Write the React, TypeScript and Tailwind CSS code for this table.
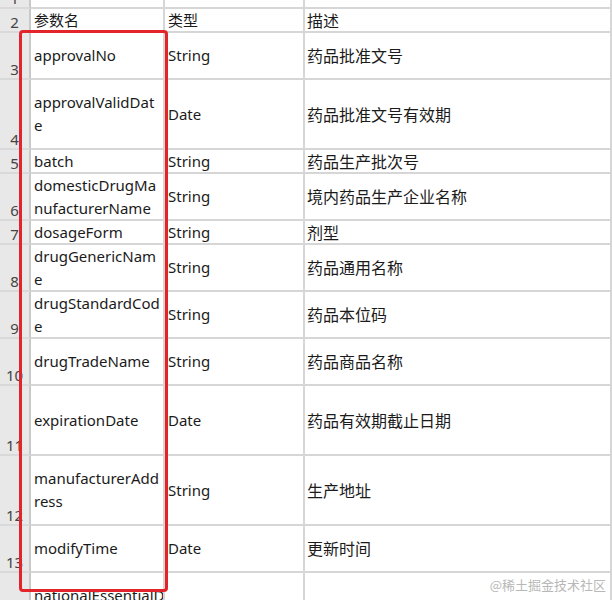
const latin = "font-['Noto_Sans','Liberation_Sans','Noto_Sans_CJK_SC',sans-serif]";
const cjk = "font-['Noto_Sans_CJK_SC','Noto_Sans',sans-serif]";

type Row = {
  n: number;
  h: string;
  name: string[];
  type: string;
  desc: string;
};

const rows: Row[] = [
  { n: 3, h: "h-[47px]", name: ["approvalNo"], type: "String", desc: "药品批准文号" },
  { n: 4, h: "h-[70px]", name: ["approvalValidDat", "e"], type: "Date", desc: "药品批准文号有效期" },
  { n: 5, h: "h-[24px]", name: ["batch"], type: "String", desc: "药品生产批次号" },
  { n: 6, h: "h-[47px]", name: ["domesticDrugMa", "nufacturerName"], type: "String", desc: "境内药品生产企业名称" },
  { n: 7, h: "h-[24px]", name: ["dosageForm"], type: "String", desc: "剂型" },
  { n: 8, h: "h-[47px]", name: ["drugGenericNam", "e"], type: "String", desc: "药品通用名称" },
  { n: 9, h: "h-[47px]", name: ["drugStandardCod", "e"], type: "String", desc: "药品本位码" },
  { n: 10, h: "h-[47px]", name: ["drugTradeName"], type: "String", desc: "药品商品名称" },
  { n: 11, h: "h-[70px]", name: ["expirationDate"], type: "Date", desc: "药品有效期截止日期" },
  { n: 12, h: "h-[70px]", name: ["manufacturerAdd", "ress"], type: "String", desc: "生产地址" },
  { n: 13, h: "h-[47px]", name: ["modifyTime"], type: "Date", desc: "更新时间" },
  { n: 14, h: "h-[70px]", name: ["nationalEssentialD", "rug"], type: "String", desc: "是否国家基本药物" },
];

function RowHead({ n, h }: { n: number; h: string }) {
  return (
    <div
      className={`${h} bg-[#e8e8e8] border-r-2 border-b-2 border-r-[#c9c9c9] border-b-[#d9d9d9] flex items-end justify-center pb-[1px] text-[15px] leading-none text-[#444] ${latin}`}
    >
      {n}
    </div>
  );
}

function Cell({ h, children, pl = "pl-[3px]" }: { h: string; children: React.ReactNode; pl?: string }) {
  return (
    <div
      className={`${h} ${pl} border-r-2 border-b-2 border-[#d6d6d6] bg-white flex flex-col justify-center overflow-hidden whitespace-nowrap text-[#1b1b1b]`}
    >
      {children}
    </div>
  );
}

export default function App() {
  return (
    <div className="relative w-[612px] h-[600px] overflow-hidden bg-white">
      <div className="-mt-[16px] grid grid-cols-[31px_134px_140px_1fr]">
        {/* row 1 */}
        <RowHead n={1} h="h-[25px]" />
        <Cell h="h-[25px]">{""}</Cell>
        <Cell h="h-[25px]">{""}</Cell>
        <Cell h="h-[25px]">{""}</Cell>

        {/* row 2: header */}
        <RowHead n={2} h="h-[24px]" />
        <Cell h="h-[24px]">
          <span className={`${cjk} text-[15px] leading-[22px]`}>参数名</span>
        </Cell>
        <Cell h="h-[24px]">
          <span className={`${cjk} text-[15px] leading-[22px]`}>类型</span>
        </Cell>
        <Cell h="h-[24px]" pl="pl-[2px]">
          <span className={`${cjk} text-[16px] leading-[22px]`}>描述</span>
        </Cell>

        {rows.map((r) => (
          <div key={r.n} className="contents">
            <RowHead n={r.n} h={r.h} />
            <Cell h={r.h}>
              {r.name.map((l, i) => (
                <span key={i} className={`${latin} text-[15px] leading-[23px]`}>
                  {l}
                </span>
              ))}
            </Cell>
            <Cell h={r.h}>
              <span className={`${latin} text-[15px] leading-[23px]`}>{r.type}</span>
            </Cell>
            <Cell h={r.h} pl="pl-[2px]">
              <span className={`${cjk} text-[16px] leading-[23px]`}>{r.desc}</span>
            </Cell>
          </div>
        ))}
      </div>

      {/* red highlight */}
      <div className="absolute left-[19px] top-[30px] w-[149px] h-[562px] border-[3px] border-[#e3252b] rounded-[4px] pointer-events-none" />

      {/* watermark */}
      <div className={`absolute right-[6px] top-[578px] text-[13px] leading-none text-[#b8b8b8] ${cjk}`}>
        @稀土掘金技术社区
      </div>
    </div>
  );
}
